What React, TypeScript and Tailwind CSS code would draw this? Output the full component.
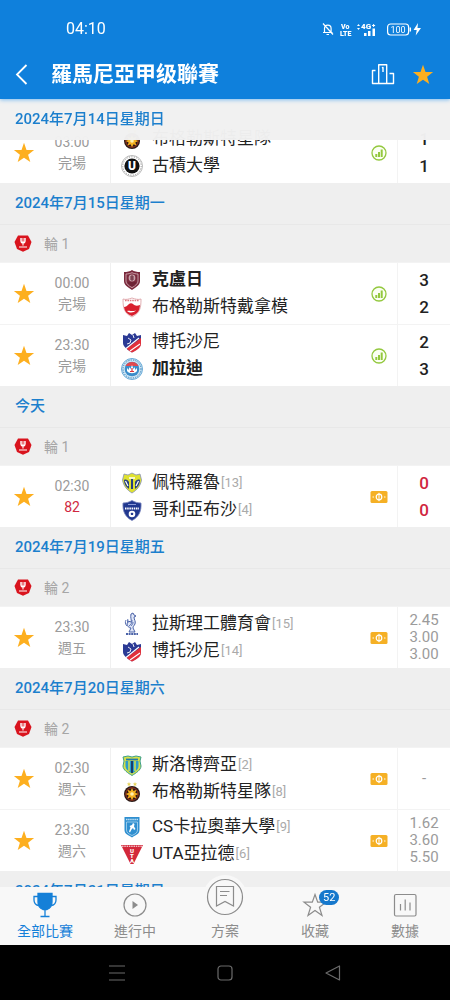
import type { ReactNode } from "react";

type Team = { name: string; crest: keyof typeof crests; rank?: number; bold?: boolean };

type Match = {
  time: string;
  status: string;
  live?: boolean;
  home: Team;
  away: Team;
  scores?: [string, string];
  odds?: string[];
};

type Section = { date: string; round?: string; matches: Match[] };

const crests = {
  fcsb: (
    <>
      <path d="M9 2l.7 1.400 1.500.1-1.200 1 .4 1.500L9 5.200l-1.400.8.4-1.500-1.200-1 1.500-.1zM15 2l.7 1.400 1.500.1-1.200 1 .4 1.500L15 5.200l-1.400.8.4-1.500-1.200-1 1.500-.1z" fill="#e6d45c" />
      <circle cx="12" cy="14" r="8" fill="#2a1a16" />
      <circle cx="12" cy="14" r="6.200" fill="none" stroke="#a5341f" />
      <path d="M12 8l1.500 3 3-1.200-1.200 3 3 1.200-3 1.500 1.200 3-3-1.200-1.500 3-1.500-3-3 1.200 1.200-3-3-1.500 3-1.200-1.200-3 3 1.200z" fill="#f6b120" />
      <circle cx="12" cy="14" r="1.800" fill="#fff1b0" />
    </>
  ),
  ucluj: (
    <>
      <circle cx="12" cy="12" r="10.500" fill="#fff" stroke="#b9b9b9" />
      <circle cx="12" cy="12" r="9.200" fill="none" stroke="#888" strokeDasharray="1 1.500" />
      <circle cx="12" cy="12" r="7.600" fill="#111" />
      <text x="12" y="16" textAnchor="middle" fontSize="12" fontWeight="900" fill="#fff">U</text>
    </>
  ),
  cfr: (
    <>
      <path d="M4 4c3 0 6-.5 8-2 2 1.500 5 2 8 2v9c0 4-4 6.500-8 9-4-2.500-8-5-8-9z" fill="#7b2a3d" />
      <path d="M6 6c2 0 4.500-.5 6-1.300C13.500 5.500 16 6 18 6v7c0 3-3 4.800-6 6.700-3-1.900-6-3.700-6-6.700z" fill="none" stroke="#d9b9bf" strokeWidth=".8" />
      <circle cx="12" cy="10" r="3.400" fill="#c9a3ab" />
      <path d="M10 9h4M10 11h4M12 7v6M8 15h8M9.500 17h5" stroke="#5e1b2c" strokeWidth=".9" />
    </>
  ),
  dinamo: (
    <>
      <path d="M3 4c3 1 6 0 9-1 3 1 6 2 9 1 0 9-1 14-9 18C4 18 3 13 3 4z" fill="#fff" stroke="#d99ba0" strokeWidth=".8" />
      <path d="M5 5.500h14" stroke="#e07c84" strokeWidth="1.400" strokeDasharray="1.600 .8" />
      <path d="M4 12c2 0 3-1 5-3 1-1 3-1 4 0 2 2 4 2 7 1-.5 6-2 8.500-8 11-5-2-7-4-8-9z" fill="#d9202e" />
      <path d="M7 16c3-1 4 1 9-.5-2 2-6 3-9 .5z" fill="#fff" />
    </>
  ),
  botosani: (
    <>
      <path d="M3 5l4 1 2-3 3 2 3-2 2 3 4-1v8c0 4-5 7-9 9.500C8 20 3 17 3 13z" fill="#2b3a94" />
      <path d="M21 8v6c0 4-5 6.500-9 8.500-2-1-4-2.500-5.500-4z" fill="#e1303b" />
      <path d="M19 8L6 18.500M20 14L10 21" stroke="#fff" strokeWidth="1.100" />
      <path d="M8 8l3 2-1 3-3 1M13 5l1 3" stroke="#fff" strokeWidth=".9" fill="none" />
    </>
  ),
  galati: (
    <>
      <circle cx="12" cy="12" r="10.500" fill="#cfe6f4" stroke="#69abd8" />
      <circle cx="12" cy="12" r="9" fill="none" stroke="#2f7db8" strokeDasharray="1.200 1.200" />
      <circle cx="12" cy="12" r="7.300" fill="#3b8dca" />
      <path d="M5.500 9a7.300 7.300 0 0 1 13 0z" fill="#e2494f" />
      <path d="M7 11v3c2 3 8 3 10 0v-3l-2 2v-3l-1.500 2L12 8l-1.500 4L9 10v3z" fill="#fff" />
      <path d="M10 14.500h4M12 11v4" stroke="#d8333c" strokeWidth="1.200" />
    </>
  ),
  petrolul: (
    <>
      <path d="M4 3l4 1 4-2 4 2 4-1 1.500 6c-1 6-4.500 10-9.500 13C7 19 3.500 15 2.500 9z" fill="#dfe22f" stroke="#8591b8" strokeWidth=".8" />
      <path d="M4 9c2-1 4 0 5 2v7c-3-2-5-5-5-9zM20 9c-2-1-4 0-5 2v7c3-2 5-5 5-9z" fill="#26407e" />
      <path d="M5.500 10l2.500 5M18.500 10L16 15" stroke="#fff" strokeWidth="1.200" />
      <path d="M11 8h2v10h-2z" fill="#26407e" />
      <path d="M9 7h6" stroke="#fff" strokeWidth="1.500" />
    </>
  ),
  voluntari: (
    <>
      <path d="M3 5c3 0 6-.8 9-2.500C15 4.200 18 5 21 5c.6 8-2 14-9 17.500C5 19 2.400 13 3 5z" fill="#21388f" stroke="#7784bd" strokeWidth=".8" />
      <path d="M5 10.500h14" stroke="#fff" strokeWidth="2" strokeDasharray="1.500 .7" />
      <path d="M8 6.500h8" stroke="#8b9ad6" strokeWidth="1" />
      <circle cx="12" cy="16" r="3.300" fill="#fff" />
      <path d="M12 14.500l1.400 1-.5 1.600h-1.800l-.5-1.600z" fill="#21388f" />
    </>
  ),
  craiova: (
    <>
      <path d="M11 2l2-1 1 2 2 1-2 1c0 3 2 4 1 7-1 2-2 2-2 4l2 4H9l2-4c-2 0-4-2-4-4 0-1 1-2 1-3l3 1c1-2-1-4 0-8z" fill="#dfe6f7" stroke="#4b63a8" strokeWidth="1" strokeLinejoin="round" />
      <path d="M6 8c-1 2-1 4 1 6M8 7c-1 1 0 3 0 4M12 8c0 3-1 5-3 6M13 10c0 2-1 3-2 4" stroke="#4b63a8" strokeWidth=".9" fill="none" />
      <path d="M6 22h12" stroke="#4b63a8" strokeWidth="1.800" strokeDasharray="2 .6" />
    </>
  ),
  slobozia: (
    <>
      <path d="M3 4l5-1 4 1 4-1 5 1-1 4 1 5c0 4-5 7-9 9.500C8 20 3 17 3 13l1-5z" fill="#d5df4a" stroke="#3c9f8a" strokeWidth="1" />
      <path d="M5.500 8h13v5c0 3-3 5.500-6.500 7.500C8.500 18.500 5.500 16 5.500 13z" fill="#2a9ccb" />
      <path d="M9 7v11M15 7v11" stroke="#d5df4a" strokeWidth="1.500" />
      <path d="M12 8v12" stroke="#183d6d" strokeWidth="2" />
      <path d="M6 6.500h12" stroke="#237aa8" strokeWidth="1.800" />
    </>
  ),
  ucraiova: (
    <>
      <path d="M4.500 2h15v13c0 4-3.500 5-7.500 7.500C8 20 4.500 19 4.500 15z" fill="#2f8fd0" />
      <path d="M6 4.500h12" stroke="#bfe0f4" strokeWidth="1.400" strokeDasharray="1.500 .6" />
      <path d="M6.500 7h11v8c0 3-2.500 4-5.500 5.500C9 19 6.500 18 6.500 15z" fill="none" stroke="#bfe0f4" strokeWidth=".7" />
      <path d="M13 8l1.500 1-.5 2.500 1.500 2.500-1.500 1-1-2-1.500 1.500-1.500 3-1-1 1.500-4-1-1.500 2.500-1z" fill="#fff" />
    </>
  ),
  uta: (
    <>
      <path d="M1 3h22L13.500 22h-3z" fill="#d3283a" />
      <path d="M2 4.200h20" stroke="#fff" strokeWidth="1" strokeDasharray="1.500 .8" />
      <g fontSize="6" fontWeight="900" fill="#fff" textAnchor="middle">
        <text x="12" y="10.500">U</text>
        <text x="12" y="15.500">T</text>
        <text x="12" y="20.500">A</text>
      </g>
    </>
  ),
};

const sections: Section[] = [
  {
    date: "2024年7月15日星期一",
    round: "輪 1",
    matches: [
      {
        time: "00:00",
        status: "完場",
        home: { name: "克盧日", crest: "cfr", bold: true },
        away: { name: "布格勒斯特戴拿模", crest: "dinamo" },
        scores: ["3", "2"],
      },
      {
        time: "23:30",
        status: "完場",
        home: { name: "博托沙尼", crest: "botosani" },
        away: { name: "加拉迪", crest: "galati", bold: true },
        scores: ["2", "3"],
      },
    ],
  },
  {
    date: "今天",
    round: "輪 1",
    matches: [
      {
        time: "02:30",
        status: "82",
        live: true,
        home: { name: "佩特羅魯", crest: "petrolul", rank: 13 },
        away: { name: "哥利亞布沙", crest: "voluntari", rank: 4 },
        scores: ["0", "0"],
      },
    ],
  },
  {
    date: "2024年7月19日星期五",
    round: "輪 2",
    matches: [
      {
        time: "23:30",
        status: "週五",
        home: { name: "拉斯理工體育會", crest: "craiova", rank: 15 },
        away: { name: "博托沙尼", crest: "botosani", rank: 14 },
        odds: ["2.45", "3.00", "3.00"],
      },
    ],
  },
  {
    date: "2024年7月20日星期六",
    round: "輪 2",
    matches: [
      {
        time: "02:30",
        status: "週六",
        home: { name: "斯洛博齊亞", crest: "slobozia", rank: 2 },
        away: { name: "布格勒斯特星隊", crest: "fcsb", rank: 8 },
        odds: ["-"],
      },
      {
        time: "23:30",
        status: "週六",
        home: { name: "CS卡拉奧華大學", crest: "ucraiova", rank: 9 },
        away: { name: "UTA亞拉德", crest: "uta", rank: 6 },
        odds: ["1.62", "3.60", "5.50"],
      },
    ],
  },
  { date: "2024年7月21日星期日", matches: [] },
];

const firstMatch: Match = {
  time: "03:00",
  status: "完場",
  home: { name: "布格勒斯特星隊", crest: "fcsb" },
  away: { name: "古積大學", crest: "ucluj" },
  scores: ["1", "1"],
};

function StarIcon() {
  return (
    <svg viewBox="0 0 22 22" className="size-[22px]" aria-hidden="true">
      <path d="M11 .8l2.500 7.100 7.600.2-6 4.600 2.200 7.300-6.300-4.300L4.700 20l2.200-7.300-6-4.600 7.600-.2z" fill="#fdaf1f" />
    </svg>
  );
}

function StatsIcon() {
  return (
    <svg viewBox="0 0 16 16" className="size-4" aria-hidden="true">
      <circle cx="8" cy="8" r="7" fill="#fbfff3" stroke="#93c83e" strokeWidth="1.300" />
      <path d="M4.300 9h2v3h-2zM7 7h2v5H7zM9.700 4.500h2V12h-2z" fill="#93c83e" />
    </svg>
  );
}

function OddsIcon() {
  return (
    <svg viewBox="0 0 18 12" className="h-3 w-[18px]" aria-hidden="true">
      <rect x=".5" y="0" width="17" height="12" rx="1.500" fill="#f5b025" />
      <circle cx="9" cy="6" r="2.800" fill="none" stroke="#fff" strokeWidth="1.200" />
      <path d="M9 1.800v8.400" stroke="#fff" strokeWidth="1" />
      <path d="M3.500 4.800L2.300 6l1.200 1.200zM14.500 4.800L15.700 6l-1.200 1.200z" fill="#fff" />
    </svg>
  );
}

function LeagueBadge() {
  return (
    <svg viewBox="0 0 18 17" className="h-[17px] w-[18px] shrink-0" aria-hidden="true">
      <path d="M4 .5h10L17.500 7 15 14l-6 2.700L3 14 .5 7z" fill="#d9141e" />
      <path d="M6.300 3h5.400v2.500c0 2.200-1.200 3.300-2.700 3.300S6.300 7.700 6.300 5.500z" fill="#fff" />
      <path d="M8.200 3v3.500M9.800 3v3.500" stroke="#d9141e" strokeWidth=".8" />
      <path d="M9 8.500v2M5 12h8" stroke="#fff" strokeWidth="1.100" />
    </svg>
  );
}

function TeamLine({ team }: { team: Team }) {
  return (
    <div className="flex h-[27px] items-center">
      <div className="flex w-[41px] shrink-0 justify-center">
        <svg viewBox="0 0 24 24" className="size-6" aria-hidden="true">
          {crests[team.crest]}
        </svg>
      </div>
      <span className={`truncate text-[17px] text-[#222] ${team.bold ? "font-bold" : ""}`}>{team.name}</span>
      {team.rank && <span className="ml-px text-[13px] text-[#aaa]">[{team.rank}]</span>}
    </div>
  );
}

function MatchRow({ match }: { match: Match }) {
  return (
    <div className="flex h-[62px] border-t border-[#f3f3f3] bg-white">
      <button aria-label="收藏" className="flex w-12 shrink-0 items-center justify-center">
        <StarIcon />
      </button>
      <div className="flex w-12 shrink-0 flex-col justify-center text-center text-sm leading-[21px] text-[#9b9b9b]">
        <span>{match.time}</span>
        <span className={match.live ? "text-[#d0273f]" : ""}>{match.status}</span>
      </div>
      <div className="ml-3.5 flex min-w-0 flex-1 flex-col justify-center border-l border-[#f0f0f0]">
        <TeamLine team={match.home} />
        <TeamLine team={match.away} />
      </div>
      <div className="flex w-9 shrink-0 items-center justify-center">
        {match.scores && !match.live ? <StatsIcon /> : <OddsIcon />}
      </div>
      <div className="flex w-[53px] shrink-0 flex-col justify-center border-l border-[#f3f3f3] text-center">
        {match.scores?.map((score, i) => (
          <span
            key={i}
            className={`text-[17px] leading-[27px] font-medium ${match.live ? "text-[#d0273f]" : "text-[#222]"}`}
          >
            {score}
          </span>
        ))}
        {match.odds?.map((odd, i) => (
          <span key={i} className="text-[15px] leading-[17px] text-[#9b9b9b]">
            {odd}
          </span>
        ))}
      </div>
    </div>
  );
}

function DateHeading({ children }: { children: ReactNode }) {
  return <h2 className="flex h-[41px] items-center px-[15px] text-[15px] font-medium text-[#1c7fcd]">{children}</h2>;
}

function StatusBar() {
  return (
    <div className="flex h-[50px] items-center justify-between pt-2 pr-7 pl-[66px]">
      <span className="text-base">04:10</span>
      <svg viewBox="0 0 100 16" className="h-4 w-[100px]" aria-hidden="true">
        <g fill="none" stroke="#fff" strokeWidth="1.200">
          <path d="M1 11.500h9.500M2.500 11.500V7.500a3.300 3.300 0 0 1 6.600 0v4M4.500 13.500h2.500M1 2.500l10 11" />
          <rect x="65.600" y="3" width="21" height="11" rx="3" />
          <path d="M88.300 6.500v4" strokeWidth="1.500" />
        </g>
        <g fill="#fff" fontWeight="900">
          <text x="19" y="7.500" fontSize="7">Vo</text>
          <text x="18" y="14.500" fontSize="7">LTE</text>
          <text x="39" y="8" fontSize="8">4G</text>
          <text x="50" y="6" fontSize="6">+</text>
        </g>
        <text x="76" y="12" fontSize="9" fill="#fff" textAnchor="middle">100</text>
        <path d="M35 5l1.500-2L38 5zM35 7h3l-1.500 2zM42 12h2.500v3H42zM46 10h2.500v5H46zM50.500 7.500H53V15h-2.500zM96 2l-4.500 7h3.200l-1 5.500L99 7h-3.500z" fill="#fff" />
      </svg>
    </div>
  );
}

const tabs = [
  {
    label: "全部比賽",
    active: true,
    icon: (
      <svg viewBox="0 0 26 26" className="size-[26px]" fill="none" stroke="currentColor" strokeWidth="1.300">
        <path d="M6 1.500h14V10c0 4-2.500 6.500-5 7.500h-4C8.500 16.500 6 14 6 10z" fill="currentColor" />
        <path d="M6 4.500H2V8c0 3 2 5 4.500 5.500M20 4.500h4V8c0 3-2 5-4.500 5.500M13 17v7M8.500 24.500h9" />
      </svg>
    ),
  },
  {
    label: "進行中",
    icon: (
      <svg viewBox="0 0 26 26" className="size-[26px]" fill="none" stroke="currentColor" strokeWidth="1.200">
        <circle cx="13" cy="13" r="11" />
        <path d="M10.500 9v8l5.500-4z" fill="currentColor" stroke="none" />
      </svg>
    ),
  },
  {
    label: "方案",
    raised: true,
    icon: (
      <svg viewBox="0 0 44 44" className="size-11" fill="none" stroke="currentColor" strokeWidth="1.200">
        <circle cx="22" cy="22" r="22" fill="#f8f8f8" stroke="none" />
        <circle cx="22" cy="22" r="17.500" />
        <path d="M13.500 11.500h17V31L22 26.500 13.500 31zM17 16.500h9.500M17 20.500h7" />
      </svg>
    ),
  },
  {
    label: "收藏",
    badge: "52",
    icon: (
      <svg viewBox="0 0 26 26" className="size-[26px]" fill="none" stroke="currentColor" strokeWidth="1.200">
        <path d="M13 2.500l2.700 7.700h8.300l-6.600 5 2.600 8.300-7-5-7 5 2.600-8.300-6.600-5h8.300z" />
      </svg>
    ),
  },
  {
    label: "數據",
    icon: (
      <svg viewBox="0 0 26 26" className="size-[26px]" fill="none" stroke="currentColor" strokeWidth="1.200">
        <rect x="2.500" y="2.500" width="21.500" height="21.500" rx="1.500" />
        <path d="M8.500 12v6.500M13.200 7.500v11M18 10.500v8" />
      </svg>
    ),
  },
];

export default function App() {
  return (
    <div className="flex h-screen flex-col overflow-hidden bg-[#efefef] font-['Roboto','Noto_Sans_CJK_TC',sans-serif]">
      <header className="relative z-20 bg-[#0f80dc] text-white shadow-[0_1px_4px_#7fbdf0]">
        <StatusBar />
        <div className="flex h-[49px] items-center pr-4 pl-[15px]">
          <button aria-label="返回">
            <svg viewBox="0 0 14 24" className="h-6 w-3.5" fill="none" stroke="currentColor" strokeWidth="1.800">
              <path d="M11.500 2L2 11.500l9.500 9.500" />
            </svg>
          </button>
          <h1 className="ml-[22px] flex-1 text-[21px] font-bold">羅馬尼亞甲级聯賽</h1>
          <button aria-label="排名" className="mr-4">
            <svg viewBox="0 0 26 24" className="h-6 w-[26px]" fill="none" stroke="currentColor" strokeWidth="1.400" strokeLinejoin="round">
              <path d="M8.700 20.500V1.800h8v18.700M5.500 7.500h-3v13h21V10.500h-4M12 5l1-.5V9" />
            </svg>
          </button>
          <button aria-label="收藏聯賽">
            <StarIcon />
          </button>
        </div>
      </header>

      <main className="min-h-0 flex-1 overflow-hidden">
        <div className="sticky top-0 z-10 bg-[#f1f1f1]/98">
          <DateHeading>2024年7月14日星期日</DateHeading>
        </div>
        <div className="-mt-[19px]">
          <MatchRow match={firstMatch} />
        </div>
        {sections.map((section) => (
          <section key={section.date}>
            <DateHeading>{section.date}</DateHeading>
            {section.round && (
              <div className="flex h-[38px] items-center gap-3 border-t border-[#e8e8e8] px-3.5 text-sm text-[#a6a6a6]">
                <LeagueBadge />
                {section.round}
              </div>
            )}
            {section.matches.map((match) => (
              <MatchRow key={match.home.name} match={match} />
            ))}
          </section>
        ))}
      </main>

      <nav className="relative z-10 grid h-[58px] shrink-0 grid-cols-5 bg-[#f8f8f8]">
        {tabs.map((tab) => (
          <button
            key={tab.label}
            className={`flex flex-col items-center justify-end pb-1 text-sm leading-5 ${tab.active ? "text-[#1580d8]" : "text-[#8c8c8c]"}`}
          >
            <span className={`relative ${tab.raised ? "-mt-5 mb-0.5" : "mb-[3px]"}`}>
              {tab.icon}
              {tab.badge && (
                <span className="absolute -top-0.5 left-[17px] rounded-full bg-[#1678cc] px-1 text-[11px] leading-[15px] text-white">
                  {tab.badge}
                </span>
              )}
            </span>
            {tab.label}
          </button>
        ))}
      </nav>

      <div className="grid h-[55px] shrink-0 grid-cols-3 place-items-center bg-black px-[63px] text-[#6b6b6b]">
        <button aria-label="選單">
          <svg viewBox="0 0 16 16" className="size-4" stroke="currentColor" strokeWidth="1.200">
            <path d="M0 1h16M0 8h16M0 15h16" />
          </svg>
        </button>
        <button aria-label="主畫面">
          <svg viewBox="0 0 16 16" className="size-4" fill="none" stroke="currentColor" strokeWidth="1.200">
            <rect x="1" y="1" width="14" height="14" rx="3" />
          </svg>
        </button>
        <button aria-label="上一頁">
          <svg viewBox="0 0 16 16" className="size-4" fill="none" stroke="currentColor" strokeWidth="1.200" strokeLinejoin="round">
            <path d="M14.500 1v14L1 8z" />
          </svg>
        </button>
      </div>
    </div>
  );
}
